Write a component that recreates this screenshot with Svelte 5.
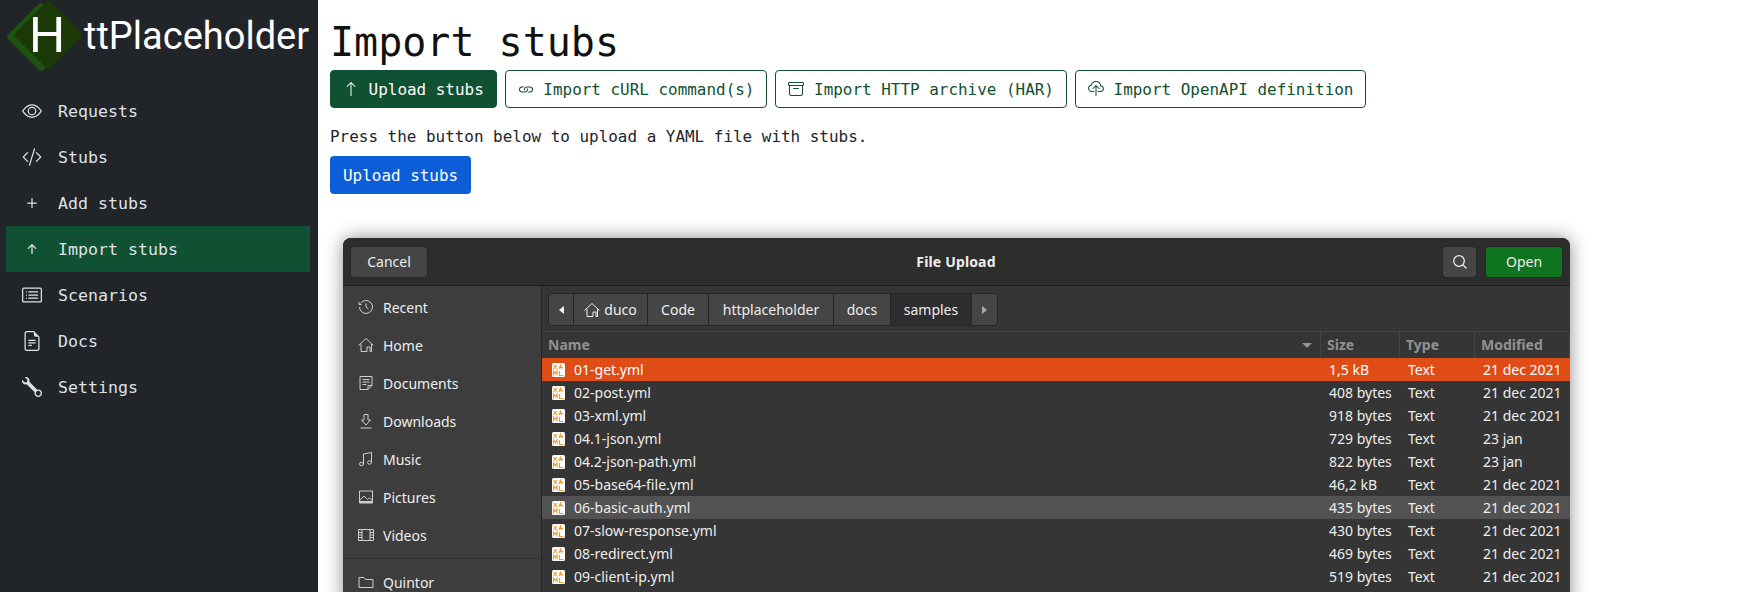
<script>
	const icons = {
		eye: 'M16 8s-3-5.5-8-5.5S0 8 0 8s3 5.5 8 5.5S16 8 16 8zM1.173 8a13.133 13.133 0 0 1 1.66-2.043C4.12 4.668 5.88 3.5 8 3.5c2.12 0 3.879 1.168 5.168 2.457A13.133 13.133 0 0 1 14.828 8c-.058.087-.122.183-.195.288-.335.48-.83 1.12-1.465 1.755C11.879 11.332 10.119 12.5 8 12.5c-2.12 0-3.879-1.168-5.168-2.457A13.134 13.134 0 0 1 1.172 8zM8 5.5a2.5 2.5 0 1 0 0 5 2.5 2.5 0 0 0 0-5zM4.5 8a3.5 3.5 0 1 1 7 0 3.5 3.5 0 0 1-7 0z',
		code: 'M10.478 1.647a.5.5 0 1 0-.956-.294l-4 13a.5.5 0 0 0 .956.294l4-13zM4.854 4.146a.5.5 0 0 1 0 .708L1.707 8l3.147 3.146a.5.5 0 0 1-.708.708l-3.5-3.5a.5.5 0 0 1 0-.708l3.5-3.5a.5.5 0 0 1 .708 0zm6.292 0a.5.5 0 0 0 0 .708L14.293 8l-3.147 3.146a.5.5 0 0 0 .708.708l3.5-3.5a.5.5 0 0 0 0-.708l-3.5-3.5a.5.5 0 0 0-.708 0z',
		plus: 'M8 4a.5.5 0 0 1 .5.5v3h3a.5.5 0 0 1 0 1h-3v3a.5.5 0 0 1-1 0v-3h-3a.5.5 0 0 1 0-1h3v-3A.5.5 0 0 1 8 4z',
		shortUp: 'M8 12a.5.5 0 0 0 .5-.5V5.707l2.146 2.147a.5.5 0 0 0 .708-.708l-3-3a.5.5 0 0 0-.708 0l-3 3a.5.5 0 1 0 .708.708L7.5 5.707V11.5a.5.5 0 0 0 .5.5z',
		up: 'M8 15a.5.5 0 0 0 .5-.5V2.707l3.146 3.147a.5.5 0 0 0 .708-.708l-4-4a.5.5 0 0 0-.708 0l-4 4a.5.5 0 1 0 .708.708L7.5 2.707V14.5a.5.5 0 0 0 .5.5z',
		card: 'M14.5 3a.5.5 0 0 1 .5.5v9a.5.5 0 0 1-.5.5h-13a.5.5 0 0 1-.5-.5v-9a.5.5 0 0 1 .5-.5h13zm-13-1A1.5 1.5 0 0 0 0 3.5v9A1.5 1.5 0 0 0 1.5 14h13a1.5 1.5 0 0 0 1.5-1.5v-9A1.5 1.5 0 0 0 14.5 2h-13zM5 8a.5.5 0 0 1 .5-.5h7a.5.5 0 0 1 0 1h-7A.5.5 0 0 1 5 8zm0-2.5a.5.5 0 0 1 .5-.5h7a.5.5 0 0 1 0 1h-7a.5.5 0 0 1-.5-.5zm0 5a.5.5 0 0 1 .5-.5h7a.5.5 0 0 1 0 1h-7a.5.5 0 0 1-.5-.5zm-1-5a.5.5 0 1 1-1 0 .5.5 0 0 1 1 0zM4 8a.5.5 0 1 1-1 0 .5.5 0 0 1 1 0zm0 2.5a.5.5 0 1 1-1 0 .5.5 0 0 1 1 0z',
		file: 'M5.5 7a.5.5 0 0 0 0 1h5a.5.5 0 0 0 0-1h-5zM5 9.5a.5.5 0 0 1 .5-.5h5a.5.5 0 0 1 0 1h-5a.5.5 0 0 1-.5-.5zm0 2a.5.5 0 0 1 .5-.5h2a.5.5 0 0 1 0 1h-2a.5.5 0 0 1-.5-.5zM9.5 0H4a2 2 0 0 0-2 2v12a2 2 0 0 0 2 2h8a2 2 0 0 0 2-2V4.5L9.5 0zm0 1v2A1.5 1.5 0 0 0 11 4.5h2V14a1 1 0 0 1-1 1H4a1 1 0 0 1-1-1V2a1 1 0 0 1 1-1h5.5z',
		wrench: 'M.102 2.223A3.004 3.004 0 0 0 3.78 5.897l6.341 6.252A3.003 3.003 0 0 0 13 16a3 3 0 1 0-.851-5.878L5.897 3.781A3.004 3.004 0 0 0 2.223.1l2.141 2.142L4 4l-1.757.364L.102 2.223zm13.37 9.019.528.026.287.445.445.287.026.529L15 13l-.242.471-.026.529-.445.287-.287.445-.529.026L13 15l-.471-.242-.529-.026-.287-.445-.445-.287-.026-.529L11 13l.242-.471.026-.529.445-.287.287-.445.529-.026L13 11l.471.242z',
		link: 'M6.354 5.5H4a3 3 0 0 0 0 6h3a3 3 0 0 0 2.83-4H9c-.086 0-.17.01-.25.031A2 2 0 0 1 7 10.5H4a2 2 0 1 1 0-4h1.535c.218-.376.495-.714.82-1zM9 5.5a3 3 0 0 0-2.83 4h1.098A2 2 0 0 1 9 6.5h3a2 2 0 1 1 0 4h-1.535a4.02 4.02 0 0 1-.82 1H12a3 3 0 1 0 0-6H9z',
		archive: 'M0 2a1 1 0 0 1 1-1h14a1 1 0 0 1 1 1v2a1 1 0 0 1-1 1v7.5a2.5 2.5 0 0 1-2.5 2.5h-9A2.5 2.5 0 0 1 1 12.5V5a1 1 0 0 1-1-1V2zm2 3v7.5A1.5 1.5 0 0 0 3.5 14h9a1.5 1.5 0 0 0 1.5-1.5V5H2zm13-3H1v2h14V2zM5 7.5a.5.5 0 0 1 .5-.5h5a.5.5 0 0 1 0 1h-5a.5.5 0 0 1-.5-.5z',
		cloud: 'M4.406 1.342A5.53 5.53 0 0 1 8 0c2.69 0 4.923 2 5.166 4.579C14.758 4.804 16 6.137 16 7.773 16 9.569 14.502 11 12.687 11H10a.5.5 0 0 1 0-1h2.688C13.979 10 15 8.988 15 7.773c0-1.216-1.02-2.228-2.313-2.228h-.5v-.5C12.188 2.825 10.328 1 8 1a4.53 4.53 0 0 0-2.941 1.1c-.757.652-1.153 1.438-1.153 2.055v.448l-.445.049C2.064 4.805 1 5.952 1 7.318 1 8.785 2.23 10 3.781 10H6a.5.5 0 0 1 0 1H3.781C1.708 11 0 9.366 0 7.318c0-1.763 1.266-3.223 2.942-3.593.143-.863.698-1.723 1.464-2.383zM7.646 4.146a.5.5 0 0 1 .708 0l3 3a.5.5 0 0 1-.708.708L8.5 5.707V14.5a.5.5 0 0 1-1 0V5.707L5.354 7.854a.5.5 0 1 1-.708-.708l3-3z'
	};

	const nav = [
		{ label: 'Requests', icon: icons.eye },
		{ label: 'Stubs', icon: icons.code },
		{ label: 'Add stubs', icon: icons.plus },
		{ label: 'Import stubs', icon: icons.shortUp, active: true },
		{ label: 'Scenarios', icon: icons.card },
		{ label: 'Docs', icon: icons.file },
		{ label: 'Settings', icon: icons.wrench }
	];

	const tabs = [
		{ label: 'Upload stubs', icon: icons.up, active: true },
		{ label: 'Import cURL command(s)', icon: icons.link },
		{ label: 'Import HTTP archive (HAR)', icon: icons.archive },
		{ label: 'Import OpenAPI definition', icon: icons.cloud }
	];

	// gtk symbolic icons, drawn as 16px strokes
	const places = [
		{ label: 'Recent', d: 'M2.5 4.5A6.5 6.5 0 1 1 1.5 8M1 3v2.500h2.500M8 4.500V8l2.500 2' },
		{ label: 'Home', d: 'M.5 8.500 8 1.500l7.500 7M3 7v7.500h6V10h3v4.500h1.500V7' },
		{ label: 'Documents', d: 'M2 1.500h12v9l-4 4H2zM10 14.500v-4h4M4.500 4.500h7M4.500 7h7M4.500 9.500h4' },
		{ label: 'Downloads', d: 'M6 1.500h4V7h2.500L8 12 3.500 7H6zM2.500 15h11' },
		{ label: 'Music', d: 'M5.500 13V3l8-1.500V11.500M5.500 13a2 1.700 0 1 1-4 0 2 1.700 0 0 1 4 0zM13.500 11.500a2 1.700 0 1 1-4 0 2 1.700 0 0 1 4 0z' },
		{ label: 'Pictures', d: 'M1.500 2h13v12h-13zM2 11l4-4 3.500 3.500 2-1.500 3 2.500M11.500 5.500h.01M1.500 12.500h13M1.500 13.500h13' },
		{ label: 'Videos', d: 'M.5 2.500h15v11H.5zM4 2.500v11M12 2.500v11M.5 5.500H4M.5 8h3.500M.5 10.500H4M12 5.500h3.500M12 8h3.500M12 10.500h3.500' }
	];

	const files = [
		['01-get.yml', '1,5 kB', '21 dec 2021'],
		['02-post.yml', '408 bytes', '21 dec 2021'],
		['03-xml.yml', '918 bytes', '21 dec 2021'],
		['04.1-json.yml', '729 bytes', '23 jan'],
		['04.2-json-path.yml', '822 bytes', '23 jan'],
		['05-base64-file.yml', '46,2 kB', '21 dec 2021'],
		['06-basic-auth.yml', '435 bytes', '21 dec 2021'],
		['07-slow-response.yml', '430 bytes', '21 dec 2021'],
		['08-redirect.yml', '469 bytes', '21 dec 2021'],
		['09-client-ip.yml', '519 bytes', '21 dec 2021']
	];

	const crumbs = ['duco', 'Code', 'httplaceholder', 'docs', 'samples'];
</script>

<div class="layout">
	<aside class="sidebar">
		<div class="brand">
			<div class="logo">
				<svg viewBox="0 0 80 72" width="80" height="72">
					<rect x="11" y="12" width="50" height="50" rx="4" transform="rotate(45 36 37)" fill="#1d5210" />
					<rect x="18.500" y="10" width="50" height="50" rx="4" transform="rotate(45 43.500 35)" fill="#1c3a08" />
				</svg>
				<span class="logo-h">H</span>
			</div>
			<span class="brand-text">ttPlaceholder</span>
		</div>
		<nav>
			{#each nav as item}
				<div class="nav-item" class:active={item.active}>
					<svg viewBox="0 0 16 16" width="20" height="20" fill="currentColor"><path d={item.icon} /></svg>
					<span>{item.label}</span>
				</div>
			{/each}
		</nav>
	</aside>

	<main class="content">
		<h1>Import stubs</h1>
		<div class="tabs">
			{#each tabs as tab}
				<button class="btn outline" class:active={tab.active}>
					<svg viewBox="0 0 16 16" width="16" height="16" fill="currentColor"><path d={tab.icon} /></svg>
					{tab.label}
				</button>
			{/each}
		</div>
		<p>Press the button below to upload a YAML file with stubs.</p>
		<button class="btn primary">Upload stubs</button>

		<div class="dialog">
			<header class="titlebar">
				<div class="gtk-btn cancel">Cancel</div>
				<div class="title">File Upload</div>
				<div class="gtk-btn search">
					<svg viewBox="0 0 16 16" width="16" height="16" fill="none" stroke="#eee" stroke-width="1.300"><circle cx="7" cy="7" r="5.300" /><path d="m11 11 3.500 3.500" /></svg>
				</div>
				<div class="gtk-btn open">Open</div>
			</header>
			<div class="body">
				<div class="places">
					{#each places as place}
						<div class="place">
							<svg viewBox="0 0 16 16" width="16" height="16" fill="none" stroke="#cfcfcf"><path d={place.d} /></svg>
							<span>{place.label}</span>
						</div>
					{/each}
					<div class="divider"></div>
					<div class="place">
						<svg viewBox="0 0 16 16" width="16" height="16" fill="none" stroke="#cfcfcf"><path d="M1 13.500v-10h5l1.500 2H15v8z" /></svg>
						<span>Quintor</span>
					</div>
				</div>
				<div class="browser">
					<div class="pathbar-wrap">
						<div class="pathbar">
							<div class="crumb"><i class="tri left"></i></div>
							{#each crumbs as crumb, i}
								<div class="crumb" class:current={crumb === 'samples'}>
									{#if i === 0}
										<svg viewBox="0 0 16 16" width="16" height="16" fill="none" stroke="#eee"><path d="M.5 8.500 8 1.500l7.500 7M3 7v7.500h6V10h3v4.500h1.500V7" /></svg>
									{/if}
									{crumb}
								</div>
							{/each}
							<div class="crumb"><i class="tri right"></i></div>
						</div>
					</div>
					<div class="row head">
						<div class="col-name">Name<i class="sort"></i></div>
						<div>Size</div>
						<div>Type</div>
						<div>Modified</div>
					</div>
					{#each files as [name, size, date], i}
						<div class="row" class:selected={i === 0} class:hover={i === 6}>
							<div class="col-name">
								<svg class="file-icon" viewBox="0 0 13 14" width="13" height="14">
									<rect width="13" height="14" rx="1.500" fill="#fff" />
									<path d="M1.500 2 5 6M5 2 1.500 6M7 6l1.500-4L10 6M8 4.500h3" fill="none" stroke="#ee9a32" stroke-width="1.100" />
									<path d="M1.500 12.500V8l1.700 2.500L5 8v4.500M7.500 8v4.500h4" fill="none" stroke="#ee9a32" stroke-width="1.100" />
								</svg>
								{name}
							</div>
							<div>{size}</div>
							<div>Text</div>
							<div>{date}</div>
						</div>
					{/each}
				</div>
			</div>
		</div>
	</main>
</div>

<style>
	:global(body) {
		overflow: hidden;
		background: #fff;
	}

	.layout {
		display: flex;
		height: 592px;
		overflow: hidden;
		font-family: 'DejaVu Sans Mono', 'Liberation Mono', monospace;
		font-size: 15.95px;
		color: #212529;
	}

	.sidebar {
		width: 318px;
		flex-shrink: 0;
		background: #212529;
		color: #dee2e6;
	}

	.brand {
		display: flex;
		align-items: center;
		height: 88px;
		padding-left: 5px;
		padding-bottom: 16px;
		box-sizing: border-box;
	}

	.logo {
		position: relative;
		width: 79px;
		height: 72px;
		flex-shrink: 0;
	}

	.logo svg {
		overflow: visible;
	}

	.logo-h {
		position: absolute;
		left: 24px;
		top: 7px;
		font: 50px/56px 'Liberation Sans', sans-serif;
		color: #fff;
	}

	.brand-text {
		font: 38px/40px 'Roboto', sans-serif;
		color: #fff;
		white-space: nowrap;
	}

	nav {
		margin: 0 8px 0 6px;
	}

	.nav-item {
		display: flex;
		align-items: center;
		gap: 16px;
		height: 46px;
		padding-left: 16px;
		font-size: 16.6px;
	}

	.nav-item span {
		padding-top: 1px;
	}

	.nav-item.active {
		background: #0f5132;
	}

	.content {
		flex: 1;
		min-width: 0;
		padding: 0 12px;
	}

	h1 {
		margin: 18px 0 4px;
		font-size: 40px;
		font-weight: 400;
		line-height: 48px;
		color: #111;
	}

	.tabs {
		display: flex;
		gap: 8px;
	}

	.btn {
		display: inline-flex;
		align-items: center;
		gap: 9.6px;
		height: 38px;
		padding: 0 12px;
		border: 1px solid transparent;
		border-radius: 4px;
		font: inherit;
		white-space: nowrap;
	}

	.outline {
		background: #fff;
		border-color: #0f5132;
		color: #0f5132;
	}

	.outline.active {
		background: #0f5132;
		color: #fff;
	}

	.primary {
		background: #0b5ed7;
		color: #fff;
	}

	p {
		margin: 17px 0 7px;
		line-height: 24px;
	}

	/* gtk file chooser */
	.dialog {
		width: 1227px;
		margin: 44px 0 0 13px;
		border-radius: 8px 8px 0 0;
		background: #353535;
		box-shadow: 0 0 18px rgba(0, 0, 0, 0.45);
		font-family: 'Noto Sans', sans-serif;
		font-size: 14px;
		color: #eee;
		overflow: hidden;
	}

	.titlebar {
		display: flex;
		align-items: center;
		gap: 8px;
		height: 47px;
		padding: 0 7px;
		background: #2d2d2d;
		border-bottom: 1px solid #1f1f1f;
	}

	.title {
		flex: 1;
		text-align: center;
		font-weight: 700;
		letter-spacing: 0.15px;
		padding-left: 42px;
	}

	.gtk-btn {
		display: flex;
		align-items: center;
		justify-content: center;
		height: 32px;
		background: #454545;
		border: 1px solid #262626;
		border-radius: 4px;
		box-sizing: border-box;
	}

	.cancel {
		width: 78px;
	}

	.search {
		width: 35px;
	}

	.open {
		width: 78px;
		background: #0e7420;
	}

	.body {
		display: flex;
		height: 320px;
	}

	.places {
		width: 198px;
		background: #3d3d3d;
		border-right: 1px solid #242424;
		flex-shrink: 0;
		padding-top: 2px;
	}

	.place {
		display: flex;
		align-items: center;
		gap: 9px;
		height: 38px;
		padding-left: 15px;
	}

	.divider {
		height: 1px;
		background: #333;
		margin: 4px 0;
	}

	.browser {
		flex: 1;
		min-width: 0;
	}

	.pathbar-wrap {
		height: 46px;
		padding: 7px 6px 0;
		box-sizing: border-box;
		background: #353535;
		border-bottom: 1px solid #444;
	}

	.pathbar {
		display: inline-grid;
		grid-template-columns: 25px 74px 61px 125px 57px 81px 25px;
		height: 33px;
		background: #454545;
		border: 1px solid #262626;
		border-radius: 4px;
		box-sizing: border-box;
	}

	.crumb {
		display: flex;
		align-items: center;
		justify-content: center;
		gap: 4px;
		border-right: 1px solid #262626;
	}

	.crumb:last-child {
		border-right: 0;
	}

	.crumb.current {
		background: #2d2d2d;
	}

	.tri {
		border: 4px solid transparent;
	}

	.tri.left {
		border-right: 5px solid #eee;
		border-left: 0;
	}

	.tri.right {
		border-left: 5px solid #aaa;
		border-right: 0;
	}

	.row {
		display: grid;
		grid-template-columns: 779px 79px 75px 1fr;
		height: 23px;
		line-height: 23px;
		background: #353535;
		white-space: nowrap;
	}

	.row > div {
		padding-left: 8px;
	}

	.row.head {
		height: 26px;
		line-height: 26px;
		font-weight: 700;
		color: #929292;
		background: #353535;
	}

	.row.head > div {
		border-right: 1px solid #444;
		padding-left: 6px;
	}

	.row.selected {
		background: #e04c16;
		color: #fff;
	}

	.row.hover {
		background: #525252;
	}

	.row .col-name {
		display: flex;
		align-items: center;
		gap: 9px;
		padding-left: 10px;
	}

	.row.head .col-name {
		position: relative;
		display: block;
		padding-left: 6px;
	}

	.sort {
		position: absolute;
		right: 8px;
		top: 11px;
		border: 5px solid transparent;
		border-top: 5px solid #929292;
		border-bottom: 0;
	}

	.file-icon {
		flex-shrink: 0;
	}
</style>
